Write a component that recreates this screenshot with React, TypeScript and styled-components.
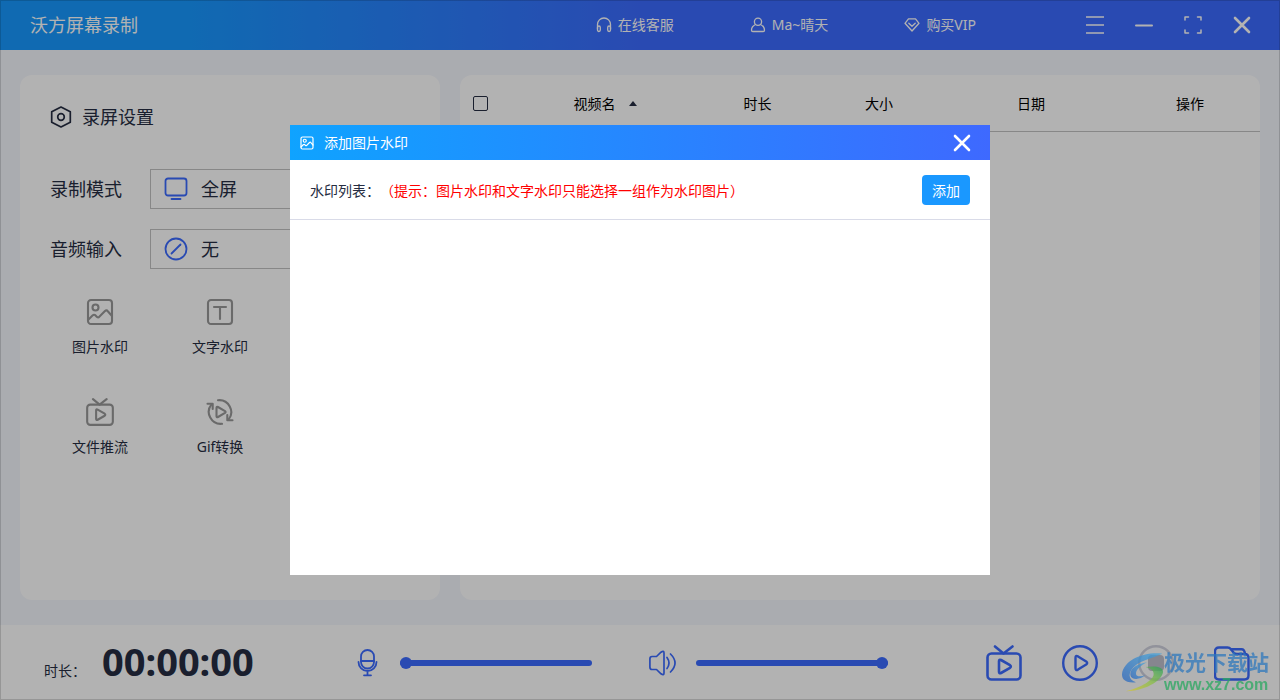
import React from "react";
import styled, { createGlobalStyle } from "styled-components";

const ink = "#262d42";
const accent = "#3c6bff";
const line = "#c2c2c2";

const GlobalStyle = createGlobalStyle`
  *, *::before, *::after { box-sizing: border-box; }
  body {
    margin: 0;
    background: #f4f6fd;
    color: ${ink};
    font: 14px/20px "Noto Sans", "Noto Sans CJK SC", sans-serif;
    text-spacing-trim: space-all;
  }
  button, select, input { font: inherit; color: inherit; }
`;

const Shell = styled.div`
  position: relative;
  display: grid;
  grid-template-rows: 50px 1fr 75px;
  min-height: 100vh;
`;

const TopBar = styled.header`
  display: flex;
  align-items: center;
  padding: 0 29px 0 30px;
  color: #fff;
  background: linear-gradient(90deg, #1799ff 0%, #1799ff 14%, ${accent} 50%);
`;

const AppName = styled.h1`
  flex: 1;
  margin: 0;
  font-size: 18px;
  font-weight: 400;
  line-height: 24px;
`;

const TopNav = styled.nav`
  display: flex;
  gap: 76px;
  margin-right: 110px;
`;

const TopLink = styled.a`
  display: flex;
  align-items: center;
  gap: 6px;
  color: inherit;
  text-decoration: none;
  white-space: nowrap;
`;

const WindowControls = styled.div`
  display: flex;
  gap: 31px;
`;

const IconButton = styled.button`
  display: flex;
  padding: 0;
  border: 0;
  background: none;
  color: inherit;
  cursor: pointer;
`;

const Icon = styled.svg<{ $size: number }>`
  display: block;
  flex: none;
  width: ${(p) => p.$size}px;
  height: ${(p) => p.$size}px;
  fill: none;
  stroke: currentColor;
  stroke-linecap: round;
  stroke-linejoin: round;
`;

const Workspace = styled.main`
  display: grid;
  grid-template-columns: 420px 1fr;
  gap: 20px;
  padding: 25px 20px;
`;

const Panel = styled.section`
  overflow: hidden;
  border-radius: 12px;
  background: #fff;
`;

const SettingsPanel = styled(Panel)`
  padding: 30px;
`;

const PanelTitle = styled.h2`
  display: flex;
  align-items: center;
  gap: 10px;
  margin: 0 0 40px;
  font-size: 18px;
  font-weight: 400;
  line-height: 24px;
`;

const Field = styled.div`
  display: grid;
  grid-template-columns: 100px 1fr;
  align-items: center;
  margin-bottom: 20px;
  font-size: 18px;
  line-height: 24px;
`;

const SelectBox = styled.div`
  display: flex;
  align-items: center;
  gap: 13px;
  height: 40px;
  padding: 0 13px;
  border: 1px solid ${line};

  svg { color: ${accent}; }
`;

const Select = styled.select`
  flex: 1;
  height: 100%;
  padding: 0;
  border: 0;
  outline: 0;
  background: none;
  appearance: none;
`;

const Tools = styled.div`
  display: grid;
  grid-template-columns: repeat(2, 120px);
  margin: 29px -10px 0;
`;

const Tool = styled.button`
  display: flex;
  flex-direction: column;
  align-items: center;
  gap: 11px;
  height: 100px;
  padding: 0;
  border: 0;
  background: none;
  cursor: pointer;

  svg { color: #999; }
`;

const VideoTable = styled.table`
  width: 100%;
  table-layout: fixed;
  border-spacing: 0;
  color: #000;
`;

const HeadCell = styled.th`
  height: 57px;
  padding: 2px 0 0;
  border-bottom: 1px solid ${line};
  font-weight: 400;
`;

const CheckCell = styled(HeadCell)`
  padding: 0 0 0 13px;
`;

const CheckBox = styled.input`
  display: block;
  width: 15px;
  height: 15px;
  margin: 0;
  border: 1px solid ${ink};
  border-radius: 2px;
  appearance: none;
`;

const SortButton = styled(IconButton)`
  display: inline-flex;
  align-items: center;
  gap: 13px;

  &::after {
    content: "";
    margin-bottom: 2px;
    border: 4px solid transparent;
    border-top: 0;
    border-bottom: 5px solid ${ink};
  }
`;

const BottomBar = styled.footer`
  display: flex;
  align-items: center;
  padding: 0 30px 0 44px;
  background: #fff;
`;

const Elapsed = styled.div`
  display: flex;
  align-items: baseline;
  gap: 24px;
  width: 309px;
  padding-bottom: 3px;
  white-space: nowrap;

  span { width: 34px; }
`;

const Clock = styled.time`
  font-size: 38px;
  font-weight: 700;
  line-height: 52px;
`;

const Level = styled.label`
  display: flex;
  align-items: center;
  gap: 19px;
  margin-right: 57px;
  color: ${accent};
`;

const Slider = styled.input`
  width: 192px;
  height: 12px;
  margin: 0;
  background: none;
  appearance: none;

  &::-webkit-slider-runnable-track {
    height: 6px;
    border-radius: 3px;
    background: ${accent};
  }
  &::-webkit-slider-thumb {
    width: 12px;
    height: 12px;
    margin-top: -3px;
    border-radius: 50%;
    background: ${accent};
    appearance: none;
  }
`;

const Actions = styled.div`
  display: flex;
  gap: 40px;
  margin-left: auto;
  color: ${accent};
`;

const Mask = styled.div`
  position: fixed;
  inset: 0;
  display: flex;
  align-items: center;
  justify-content: center;
  border: 1px solid rgba(0, 0, 0, 0.16);
  background: rgba(0, 0, 0, 0.3);
`;

const Dialog = styled.div`
  width: 700px;
  max-width: 100%;
  min-height: 450px;
  background: #fff;
`;

const DialogBar = styled.div`
  display: flex;
  align-items: center;
  gap: 10px;
  height: 35px;
  padding: 0 19px 0 10px;
  color: #fff;
  background: linear-gradient(90deg, #0fa3ff, #3e69ff);
`;

const DialogTitle = styled.h2`
  flex: 1;
  margin: 0;
  font-size: 14px;
  font-weight: 400;
`;

const ListBar = styled.div`
  display: flex;
  align-items: center;
  justify-content: space-between;
  height: 60px;
  padding: 0 20px;
  border-bottom: 1px solid #d9dbe8;
`;

const ListLabel = styled.div`
  padding-top: 2px;
`;

const Hint = styled.span`
  color: #f00;
`;

const AddButton = styled.button`
  width: 48px;
  height: 30px;
  padding: 2px 0 0;
  border: 0;
  border-radius: 4px;
  background: #1a98ff;
  color: #fff;
  cursor: pointer;
`;

const SiteMark = styled.div`
  position: fixed;
  right: 11px;
  bottom: 6px;
  display: flex;
  align-items: center;
  opacity: 0.75;
  pointer-events: none;
`;

const SiteText = styled.div`
  display: flex;
  flex-direction: column;
  font-weight: 700;
`;

const SiteName = styled.span`
  color: #2f78bd;
  font-size: 21px;
  line-height: 28px;
`;

const SiteUrl = styled.span`
  color: #2aa860;
  font: 700 16px/18px "Liberation Sans", sans-serif;
`;

const PictureIcon = ({ size, weight }: { size: number; weight: number }) => (
  <Icon $size={size} viewBox="0 0 28 28" strokeWidth={weight} aria-hidden>
    <rect x="2" y="2" width="24" height="24" rx="3" />
    <circle cx="9.500" cy="9.500" r="3" />
    <path d="M2 22l4.500-4.500q1.500-1.300 2.800-.3l1.700 1.800q1.300 1 2.500-.4l5.500-5.600q1.500-1.400 2.800.2L26 18" />
  </Icon>
);

const CloseIcon = () => (
  <Icon $size={18} viewBox="0 0 18 18" strokeWidth="2.600" aria-hidden>
    <path d="M2 2l14 14M16 2L2 16" />
  </Icon>
);

const TvIcon = ({ size, weight }: { size: number; weight: number }) => (
  <Icon $size={size} viewBox="0 0 36 36" strokeWidth={weight} aria-hidden>
    <rect x="1.500" y="8.500" width="33" height="26" rx="4" />
    <path d="M9 1.500l8.500 7L26.500 1.500" />
    <path d="M13 16.200v10.600q0 2.200 2 1.200l9-5.200q1.600-1.300 0-2.600l-9-5.200q-2-1-2 1.200z" />
  </Icon>
);

export default function App() {
  return (
    <>
      <GlobalStyle />
      <Shell>
        <TopBar>
          <AppName>沃方屏幕录制</AppName>
          <TopNav>
            <TopLink href="#service">
              <Icon $size={16} viewBox="0 0 16 16" strokeWidth="1.300" aria-hidden>
                <path d="M1.500 12V7.500a6.500 6.500 0 0 1 13 0V12" />
                <rect x="1.500" y="9" width="2.800" height="5.500" rx="1.400" />
                <rect x="11.700" y="9" width="2.800" height="5.500" rx="1.400" />
              </Icon>
              在线客服
            </TopLink>
            <TopLink href="#account">
              <Icon $size={16} viewBox="0 0 16 16" strokeWidth="1.300" aria-hidden>
                <circle cx="8" cy="4.700" r="3.600" />
                <path d="M5.500 7.500C3 8.700 1.500 10.800 1.500 13.200q0 1.300 1.300 1.300h10.400q1.300 0 1.300-1.300c0-2.400-1.500-4.500-4-5.700" />
              </Icon>
              Ma~晴天
            </TopLink>
            <TopLink href="#vip">
              <Icon $size={16} viewBox="0 0 16 16" strokeWidth="1.300" aria-hidden>
                <path d="M4.500 1.800h7L15 6.300 8 14 1 6.300z" />
                <path d="M4.800 6.300L8 9.300l3.200-3" />
              </Icon>
              购买VIP
            </TopLink>
          </TopNav>
          <WindowControls>
            <IconButton aria-label="菜单">
              <Icon $size={18} viewBox="0 0 18 18" strokeWidth="1.700" strokeLinecap="butt" aria-hidden>
                <path d="M0 1h18M0 9h18M0 17h18" />
              </Icon>
            </IconButton>
            <IconButton aria-label="最小化">
              <Icon $size={18} viewBox="0 0 18 18" strokeWidth="2" aria-hidden>
                <path d="M1 9.500h16" />
              </Icon>
            </IconButton>
            <IconButton aria-label="最大化">
              <Icon $size={18} viewBox="0 0 18 18" strokeWidth="1.500" aria-hidden>
                <path d="M1 4V1h3.500M13.500 1H17v3M1 14v3h3.500M13.500 17H17v-3" />
              </Icon>
            </IconButton>
            <IconButton aria-label="关闭">
              <CloseIcon />
            </IconButton>
          </WindowControls>
        </TopBar>

        <Workspace>
          <SettingsPanel>
            <PanelTitle>
              <Icon $size={22} viewBox="0 0 22 22" strokeWidth="1.700" aria-hidden>
                <path d="M11 1l9.300 4.800v10.400L11 21l-9.300-4.800V5.800z" />
                <circle cx="11" cy="11" r="3.300" />
              </Icon>
              录屏设置
            </PanelTitle>
            <Field>
              <label htmlFor="mode">录制模式</label>
              <SelectBox>
                <Icon $size={24} viewBox="0 0 24 24" strokeWidth="1.800" aria-hidden>
                  <rect x="1.500" y="1.500" width="21" height="17" rx="2.500" />
                  <path d="M7.500 22h9" />
                </Icon>
                <Select id="mode" defaultValue="full">
                  <option value="full">全屏</option>
                </Select>
              </SelectBox>
            </Field>
            <Field>
              <label htmlFor="audio">音频输入</label>
              <SelectBox>
                <Icon $size={24} viewBox="0 0 24 24" strokeWidth="1.800" aria-hidden>
                  <circle cx="12" cy="12" r="10.500" />
                  <path d="M7.500 16.500l9-9" />
                </Icon>
                <Select id="audio" defaultValue="none">
                  <option value="none">无</option>
                </Select>
              </SelectBox>
            </Field>
            <Tools>
              <Tool>
                <PictureIcon size={28} weight={2.1} />
                图片水印
              </Tool>
              <Tool>
                <Icon $size={28} viewBox="0 0 28 28" strokeWidth="2.100" aria-hidden>
                  <rect x="2" y="2" width="24" height="24" rx="3" />
                  <path d="M8 9h12M14 9v12" />
                </Icon>
                文字水印
              </Tool>
              <Tool>
                <TvIcon size={28} weight={2.7} />
                文件推流
              </Tool>
              <Tool>
                <Icon $size={28} viewBox="0 0 28 28" strokeWidth="2.100" aria-hidden>
                  <path d="M12 2.200a12 12 0 0 1 10.500 19.500M16 25.800A12 12 0 0 1 5.500 6.300" />
                  <path d="M1.500 5.700h5.200v5.200M26.500 22.300h-5.200v-5.200" />
                  <path d="M10.500 10v8q0 1.800 1.500 1l7-4.200q1.200-.8 0-1.600l-7-4.200q-1.500-.8-1.500 1z" />
                </Icon>
                Gif转换
              </Tool>
            </Tools>
          </SettingsPanel>

          <Panel>
            <VideoTable>
              <colgroup>
                <col width="51" />
                <col width="188" />
                <col width="117" />
                <col width="126" />
                <col width="178" />
                <col width="140" />
              </colgroup>
              <thead>
                <tr>
                  <CheckCell>
                    <CheckBox type="checkbox" aria-label="全选" />
                  </CheckCell>
                  <HeadCell>
                    <SortButton>视频名</SortButton>
                  </HeadCell>
                  <HeadCell>时长</HeadCell>
                  <HeadCell>大小</HeadCell>
                  <HeadCell>日期</HeadCell>
                  <HeadCell>操作</HeadCell>
                </tr>
              </thead>
            </VideoTable>
          </Panel>
        </Workspace>

        <BottomBar>
          <Elapsed>
            <span>时长：</span>
            <Clock>00:00:00</Clock>
          </Elapsed>
          <Level aria-label="麦克风音量">
            <Icon $size={28} viewBox="0 0 28 28" strokeWidth="1.800" aria-hidden>
              <rect x="8" y="1" width="13" height="18.500" rx="6.500" />
              <path d="M8 12h13M5.500 13a9 9 0 0 0 18 0M14.500 22v4M11 26.300h7" />
            </Icon>
            <Slider type="range" min="0" max="100" defaultValue="0" />
          </Level>
          <Level aria-label="扬声器音量">
            <Icon $size={28} viewBox="0 0 28 28" strokeWidth="1.700" aria-hidden>
              <path d="M3 7.500h4.500L12 3.200q3-2 3 .8v20q0 2.800-3 .8l-4.500-4.300H3Q.9 20.500.9 18V10q0-2.500 2.100-2.500z" />
              <path d="M18 8.500q4 5.500 0 11M21.500 5q9 9 0 18" />
            </Icon>
            <Slider type="range" min="0" max="100" defaultValue="100" />
          </Level>
          <Actions>
            <IconButton aria-label="推流">
              <TvIcon size={36} weight={2.6} />
            </IconButton>
            <IconButton aria-label="开始录制">
              <Icon $size={36} viewBox="0 0 36 36" strokeWidth="2.400" aria-hidden>
                <circle cx="18" cy="18" r="16.800" />
                <path d="M13.500 13v10q0 3 2.500 1.600l8.200-5q2-1.600 0-3.200L16 11.400q-2.500-1.400-2.500 1.600z" />
              </Icon>
            </IconButton>
            <IconButton aria-label="停止录制" disabled>
              <Icon $size={36} viewBox="0 0 36 36" strokeWidth="2.400" aria-hidden>
                <circle cx="18" cy="18" r="16.800" stroke="#d0d2de" />
                <rect x="10" y="10" width="16" height="16" rx="4" fill="#c0c1cd" stroke="none" />
              </Icon>
            </IconButton>
            <IconButton aria-label="打开文件夹">
              <Icon $size={36} viewBox="0 0 36 36" strokeWidth="2.400" aria-hidden>
                <path d="M5 2.500h8.500q2 0 3.500 1.800l2.500 3.200q1.200 1.500 3.500 1.500h7.500q4 0 4 4v17.500q0 4-4 4h-25.500q-4 0-4-4v-24q0-4 4-4z" />
                <path d="M17 4.300h10.500q3 0 3.500 4.500" />
              </Icon>
            </IconButton>
          </Actions>
        </BottomBar>
      </Shell>

      <Mask>
        <Dialog role="dialog" aria-labelledby="dialog-title">
          <DialogBar>
            <PictureIcon size={14} weight={2.4} />
            <DialogTitle id="dialog-title">添加图片水印</DialogTitle>
            <IconButton aria-label="关闭">
              <CloseIcon />
            </IconButton>
          </DialogBar>
          <ListBar>
            <ListLabel>
              水印列表：<Hint>（提示：图片水印和文字水印只能选择一组作为水印图片）</Hint>
            </ListLabel>
            <AddButton>添加</AddButton>
          </ListBar>
        </Dialog>
      </Mask>

      <SiteMark>
        <svg width="43" height="42" viewBox="30 55 129 126" aria-hidden>
          <defs>
            <linearGradient id="sky" x1="0" y1="1" x2="1" y2="0">
              <stop offset="0" stopColor="#2a66bd" />
              <stop offset="1" stopColor="#45a5dc" />
            </linearGradient>
            <linearGradient id="leaf" x1="0" y1="1" x2="1" y2="0">
              <stop offset="0" stopColor="#d8c62c" />
              <stop offset="0.500" stopColor="#8fbf45" />
              <stop offset="1" stopColor="#28a05a" />
            </linearGradient>
          </defs>
          <path fill="url(#sky)" d="M154 66C100 60 38 84 33 128c-1 18 16 27 42 24-25-8-26-32 0-52 20-15 48-21 79-34z" />
          <path fill="url(#sky)" d="M108 92C78 96 56 112 58 130c2 15 28 16 45 1-14 5-28 4-28-5 0-12 14-24 33-34z" />
          <path fill="url(#leaf)" d="M104 106c30-5 54 0 52 16-5 28-56 56-112 57 48-12 84-34 84-52 0-12-12-18-24-21z" />
        </svg>
        <SiteText>
          <SiteName>极光下载站</SiteName>
          <SiteUrl>www.xz7.com</SiteUrl>
        </SiteText>
      </SiteMark>
    </>
  );
}
